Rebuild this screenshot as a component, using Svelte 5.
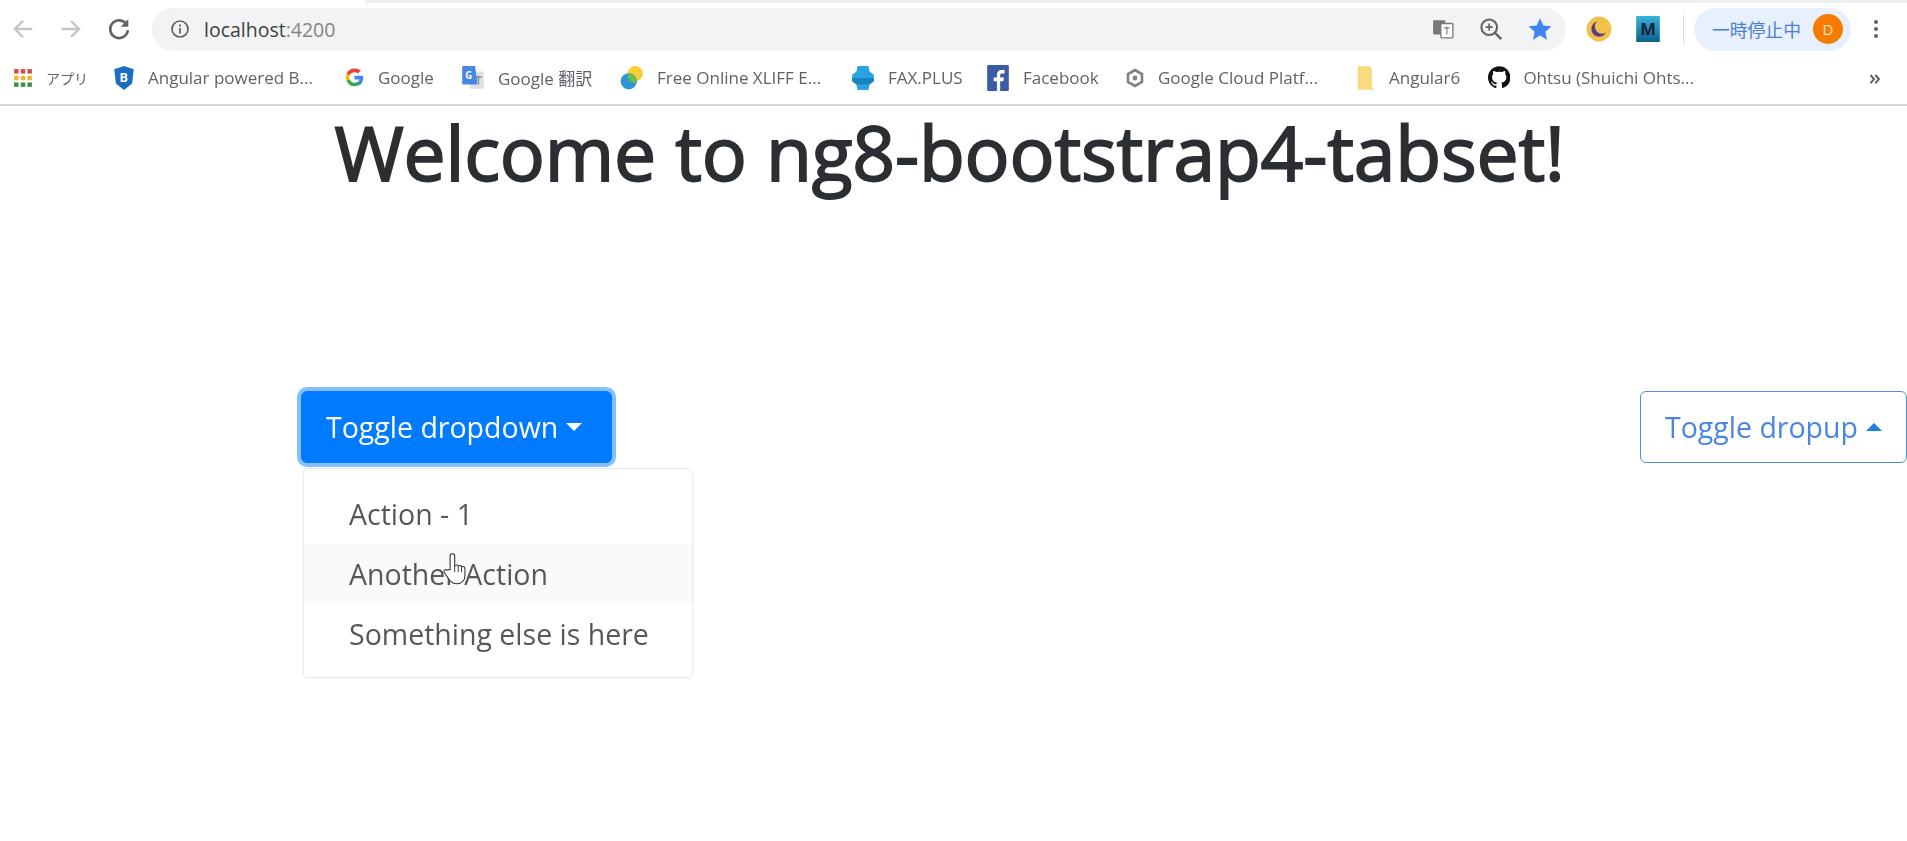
<script>
  const bookmarks = [
    { id: 'apps', label: 'アプリ', w: 100 },
    { id: 'bs', label: 'Angular powered B...', w: 231 },
    { id: 'g', label: 'Google', w: 117 },
    { id: 'tr', label: 'Google 翻訳', w: 159 },
    { id: 'xl', label: 'Free Online XLIFF E...', w: 231 },
    { id: 'fax', label: 'FAX.PLUS', w: 135 },
    { id: 'fb', label: 'Facebook', w: 139 },
    { id: 'gc', label: 'Google Cloud Platf...', w: 231 },
    { id: 'fold', label: 'Angular6', w: 132 },
    { id: 'gh', label: 'Ohtsu (Shuichi Ohts...', w: 206 }
  ];
  const items = ['Action - 1', 'Another Action', 'Something else is here'];
</script>

<div class="page">
  <div class="tabstrip"><span class="tab"></span><span class="rest"></span></div>

  <div class="toolbar">
    <svg class="nav" viewBox="0 0 24 24" width="28" height="28"><path d="M20 12H5M12 5l-7 7 7 7" fill="none" stroke="#c4c7ca" stroke-width="2"/></svg>
    <svg class="nav" viewBox="0 0 24 24" width="28" height="28"><path d="M4 12h15M12 5l7 7-7 7" fill="none" stroke="#c4c7ca" stroke-width="2"/></svg>
    <svg class="nav" viewBox="0 0 24 24" width="28" height="28"><path d="M18.400 8A7.600 7.600 0 1 0 19.600 13" fill="none" stroke="#5f6368" stroke-width="2.200"/><path d="M20 3.500V10h-6.500z" fill="#5f6368"/></svg>

    <div class="omnibox">
      <svg viewBox="0 0 20 20" width="20" height="20"><circle cx="10" cy="10" r="8" fill="none" stroke="#5f6368" stroke-width="1.700"/><path d="M10 9v5.500M10 5.500v2" stroke="#5f6368" stroke-width="1.800"/></svg>
      <span class="url">localhost<span class="port">:4200</span></span>
      <span class="spacer"></span>
      <div class="omni-icons">
        <svg viewBox="0 0 20 20" width="22" height="22"><rect x="1" y="2" width="11" height="13" rx="1" fill="#75797d"/><rect x="8" y="5" width="11" height="13" rx="1" fill="#fff" stroke="#75797d" stroke-width="1.200"/><path d="M11 9h5M13.500 8v7" stroke="#75797d" stroke-width="1"/></svg>
        <svg viewBox="0 0 20 20" width="24" height="24"><circle cx="8.500" cy="8.500" r="6.500" fill="none" stroke="#5f6368" stroke-width="1.700"/><path d="M13.500 13.500l5 5" stroke="#5f6368" stroke-width="2"/><path d="M5.500 8.500h6M8.500 5.500v6" stroke="#5f6368" stroke-width="1.400"/></svg>
        <svg viewBox="0 0 20 20" width="24" height="24"><path d="M10 1l2.800 6.100 6.700.7-5 4.500 1.400 6.600L10 15.500l-5.900 3.400 1.400-6.600-5-4.500 6.700-.7z" fill="#4285f4"/></svg>
      </div>
    </div>

    <div class="ext">
      <svg viewBox="0 0 22 22" width="26" height="26"><circle cx="11" cy="11" r="10.500" fill="#f0c24c"/><circle cx="11" cy="11" r="6.500" fill="#5a3a82"/><circle cx="13.500" cy="9" r="6" fill="#f0c24c"/></svg>
      <svg viewBox="0 0 20 22" width="24" height="26"><defs><linearGradient id="mg" x1="0" y1="0" x2="0" y2="1"><stop offset="0" stop-color="#35b6dd"/><stop offset="1" stop-color="#0d5f8e"/></linearGradient></defs><rect width="20" height="22" fill="url(#mg)"/><text x="10" y="16" text-anchor="middle" font-size="14" font-weight="700" font-family="Open Sans" fill="#123">M</text></svg>
    </div>
    <span class="divider"></span>

    <div class="pill">
      <span>一時停止中</span>
      <span class="avatar">D</span>
    </div>
    <svg class="dots" viewBox="0 0 6 22" width="6" height="22"><circle cx="3" cy="4" r="2" fill="#5f6368"/><circle cx="3" cy="11" r="2" fill="#5f6368"/><circle cx="3" cy="18" r="2" fill="#5f6368"/></svg>
  </div>

  <div class="bookmarks">
    {#each bookmarks as b}
      <div class="bm" class:apps={b.id === 'apps'} style="width:{b.w}px">
        {#if b.id === 'apps'}
          <svg viewBox="0 0 18 18" width="20" height="20">
            {#each [0, 1, 2] as r}
              {#each [0, 1, 2] as c}
                <rect x={1 + c * 6} y={1 + r * 6} width="4" height="4" fill={['#d9493d', '#f2b632', '#3c8f4f'][r]} />
              {/each}
            {/each}
          </svg>
        {:else if b.id === 'bs'}
          <svg viewBox="0 0 20 24" width="22" height="26"><path d="M10 1l9 3-1.500 13L10 23 2.500 17 1 4z" fill="#1a6fc4"/><text x="10" y="16" text-anchor="middle" font-size="12" font-weight="700" font-family="Open Sans" fill="#fff">B</text></svg>
        {:else if b.id === 'g'}
          <svg viewBox="0 0 24 24" width="21" height="21"><path d="M22 12.200c0-.8-.1-1.500-.2-2.200H12v4.200h5.600a4.800 4.800 0 0 1-2.100 3.100v2.600h3.400c2-1.800 3.100-4.500 3.100-7.700z" fill="#4285f4"/><path d="M12 22c2.800 0 5.200-.9 6.900-2.500l-3.400-2.600c-.9.600-2.100 1-3.500 1-2.700 0-5-1.800-5.800-4.300H3.200v2.700A10 10 0 0 0 12 22z" fill="#34a853"/><path d="M6.200 13.600a6 6 0 0 1 0-3.800V7.100H3.200a10 10 0 0 0 0 9.200z" fill="#fbbc05"/><path d="M12 5.900c1.500 0 2.900.5 3.900 1.500l3-3A10 10 0 0 0 3.200 7.100l3 2.700C7 7.700 9.300 5.900 12 5.900z" fill="#ea4335"/></svg>
        {:else if b.id === 'tr'}
          <svg viewBox="0 0 22 24" width="24" height="26"><rect x="8" y="6" width="13" height="16" fill="#dfe1e3"/><path d="M13 11h6M16 10v8" stroke="#8a8f94" stroke-width="1.400"/><path d="M2 1h11l2 17H2a1 1 0 0 1-1-1V2a1 1 0 0 1 1-1z" fill="#4a86e8"/><text x="7" y="13" text-anchor="middle" font-size="9" font-weight="700" font-family="Open Sans" fill="#fff">G</text></svg>
        {:else if b.id === 'xl'}
          <svg viewBox="0 0 22 24" width="24" height="26"><circle cx="14" cy="8" r="7" fill="#f7ce2f"/><circle cx="8" cy="15" r="7.500" fill="#2e97d4"/><path d="M8 8a7 7 0 0 1 7 7 7 7 0 0 1-1 1.500A7 7 0 0 1 7 9z" fill="#6cbf4b"/></svg>
        {:else if b.id === 'fax'}
          <svg viewBox="0 0 22 24" width="24" height="26"><path d="M6 1h10l1 5 4 3v6l-4 3-1 5H6l-1-5-4-3V9l4-3z" fill="#2aa4e0"/><path d="M1 12h20v3l-4 3H5l-4-3z" fill="#1784bd"/></svg>
        {:else if b.id === 'fb'}
          <svg viewBox="0 0 20 24" width="24" height="26"><rect width="20" height="24" rx="1" fill="#3b5ba6"/><path d="M12 24v-9h3l.5-3.500H12V9.500c0-1 .4-1.700 1.700-1.700H16V4.700C15.500 4.600 14.500 4.500 13.300 4.500 10.700 4.500 9 6 9 8.800v2.700H6V15h3v9z" fill="#fff"/></svg>
        {:else if b.id === 'gc'}
          <svg viewBox="0 0 20 20" width="20" height="20"><path d="M10 2l7 4v8l-7 4-7-4V6z" fill="none" stroke="#7f8386" stroke-width="2.600"/><circle cx="10" cy="10" r="2.400" fill="#7f8386"/></svg>
        {:else if b.id === 'fold'}
          <svg viewBox="0 0 16 22" width="20" height="26"><path d="M1 1h10l2 2v16l2 2H1z" fill="#fbd97e"/></svg>
        {:else}
          <svg viewBox="0 0 16 16" width="23" height="23"><path d="M8 0C3.580 0 0 3.580 0 8c0 3.540 2.290 6.530 5.470 7.590.4.070.55-.17.55-.38 0-.19-.01-.82-.01-1.490-2.010.37-2.530-.49-2.690-.94-.09-.23-.48-.94-.82-1.130-.28-.15-.68-.52-.01-.53.630-.01 1.080.580 1.230.820.720 1.210 1.870.870 2.330.660.070-.520.280-.870.510-1.070-1.780-.2-3.640-.890-3.640-3.950 0-.870.310-1.590.820-2.150-.080-.2-.360-1.020.080-2.120 0 0 .670-.210 2.200.820a7.420 7.420 0 0 1 4 0c1.530-1.040 2.200-.820 2.200-.820.440 1.100.160 1.920.080 2.120.510.560.820 1.270.820 2.150 0 3.070-1.870 3.750-3.650 3.950.290.250.540.730.540 1.480 0 1.070-.010 1.930-.010 2.200 0 .210.150.460.550.380A8.010 8.010 0 0 0 16 8c0-4.420-3.580-8-8-8z" fill="#111"/></svg>
        {/if}
        <span>{b.label}</span>
      </div>
    {/each}
    <span class="spacer"></span>
    <span class="more">»</span>
  </div>

  <h1>Welcome to ng8-bootstrap4-tabset!</h1>

  <div class="row">
    <div class="dropdown">
      <button class="btn primary">Toggle dropdown<i class="caret down"></i></button>
      <div class="menu">
        {#each items as item, i}
          <div class="item" class:hover={i === 1}>{item}</div>
        {/each}
        <svg class="cursor" viewBox="0 0 20 26" width="27" height="35"><path d="M6 13V3a1.700 1.700 0 0 1 3.400 0v7l1-.2a1.500 1.500 0 0 1 1.600.2l1 .2a1.500 1.500 0 0 1 1.500.4l.8.200c1 0 1.700.7 1.700 1.800v5c0 3-2 6-6 6-3 0-4.500-1-6-3.500L1.500 15c-.6-1.200 1-2.500 2-1.500z" fill="#fff" stroke="#333" stroke-width=".8"/><path d="M9.400 10v5M12 10v5M14.500 10.500V15" stroke="#333" stroke-width=".7"/></svg>
      </div>
    </div>
    <button class="btn outline">Toggle dropup<i class="caret up"></i></button>
  </div>
</div>

<style>
  :global(body) {
    margin: 0;
    background: #fff;
    overflow: hidden;
  }
  .page {
    width: 1907px;
    height: 841px;
    overflow: hidden;
    font-family: "Open Sans", "Noto Sans CJK JP", sans-serif;
    display: flex;
    flex-direction: column;
    filter: blur(0.4px);
  }
  .tabstrip {
    height: 3px;
    display: flex;
  }
  .tab {
    width: 365px;
  }
  .rest {
    flex: 1;
    background: #eceef0;
  }
  .toolbar {
    height: 52px;
    display: flex;
    align-items: center;
    padding-left: 9px;
  }
  .nav {
    margin-right: 20px;
  }
  .omnibox {
    margin-left: -1px;
    width: 1414px;
    height: 43px;
    background: #f1f3f4;
    border-radius: 22px;
    display: flex;
    align-items: center;
    padding: 0 14px 0 18px;
    box-sizing: border-box;
    gap: 14px;
  }
  .omni-icons {
    display: flex;
    align-items: center;
    gap: 25px;
  }
  .url {
    font-size: 19.500px;
    color: #3c4043;
  }
  .port {
    color: #80868b;
  }
  .spacer {
    flex: 1;
  }
  .ext {
    display: flex;
    align-items: center;
    gap: 24px;
    margin-left: 20px;
  }
  .divider {
    width: 1px;
    height: 28px;
    background: #dadce0;
    margin: 0 10px 0 23px;
  }
  .pill {
    width: 157px;
    height: 43px;
    box-sizing: border-box;
    background: #e8f0fe;
    border-radius: 22px;
    display: flex;
    align-items: center;
    justify-content: space-between;
    padding: 0 8px 0 18px;
    font-size: 17.800px;
    color: #4a7fd0;
  }
  .avatar {
    width: 30px;
    height: 30px;
    border-radius: 50%;
    background: #f57c00;
    color: #fde3c4;
    font-size: 15px;
    display: flex;
    align-items: center;
    justify-content: center;
  }
  .dots {
    margin-left: 22px;
  }
  .bookmarks {
    height: 51px;
    display: flex;
    align-items: center;
    padding-left: 13px;
    padding-bottom: 4px;
    border-bottom: 2px solid #d4d5d7;
    box-sizing: border-box;
  }
  .bm {
    display: flex;
    align-items: center;
    gap: 13px;
    font-size: 17px;
    color: #5f6368;
    white-space: nowrap;
    flex: none;
  }
  .apps {
    font-size: 14px;
  }
  .more {
    font-size: 22px;
    font-weight: 600;
    color: #5f6368;
    margin-right: 26px;
    margin-top: -4px;
  }
  h1 {
    margin: 0;
    text-align: center;
    font-size: 75px;
    font-weight: 400;
    letter-spacing: -0.200px;
    -webkit-text-stroke: 1.800px #2b2f33;
    line-height: 86px;
    color: #2b2f33;
    padding: 3px 8px 0 0;
  }
  .row {
    margin-top: 196px;
    padding-left: 301px;
    display: flex;
    justify-content: space-between;
    align-items: center;
  }
  .dropdown {
    position: relative;
  }
  .btn {
    font-family: inherit;
    font-size: 28.500px;
    height: 72px;
    border-radius: 6px;
    padding: 0 24px;
    display: flex;
    align-items: center;
    box-sizing: border-box;
    white-space: nowrap;
    cursor: pointer;
  }
  .primary {
    width: 311px;
    background: #007bff;
    border: 1px solid #007bff;
    color: #fff;
    box-shadow: 0 0 0 4px #85bfff;
  }
  .outline {
    width: 267px;
    background: #fff;
    border: 1.500px solid #4a90e2;
    color: #4a86e0;
  }
  .caret {
    display: inline-block;
    margin-left: 8px;
    border-left: 8.500px solid transparent;
    border-right: 8.500px solid transparent;
  }
  .down {
    border-top: 8.500px solid #fff;
  }
  .up {
    border-bottom: 8.500px solid #1e7fe0;
  }
  .menu {
    position: absolute;
    left: 2px;
    top: 77px;
    width: 390px;
    height: 210px;
    box-sizing: border-box;
    padding: 15px 0;
    background: #fff;
    border: 1px solid #e9eaeb;
    border-radius: 5px;
    box-shadow: 0 1px 3px rgba(0, 0, 0, 0.04);
  }
  .item {
    height: 60px;
    line-height: 60px;
    padding-left: 45px;
    font-size: 28.500px;
    color: #55585b;
    white-space: nowrap;
  }
  .hover {
    background: #f9fafb;
  }
  .cursor {
    position: absolute;
    left: 138px;
    top: 83px;
  }
</style>
